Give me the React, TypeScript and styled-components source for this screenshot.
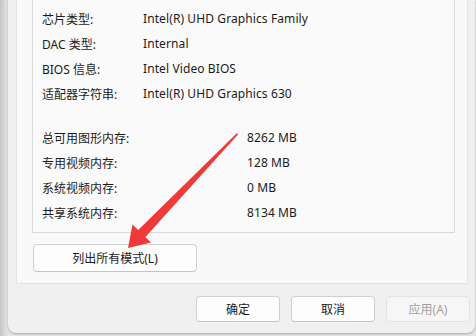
import React from "react"
import styled, { createGlobalStyle } from "styled-components"

const GlobalStyle = createGlobalStyle`
  html, body {
    margin: 0;
    padding: 0;
    width: 476px;
    height: 336px;
    overflow: hidden;
    background: linear-gradient(90deg, #c4c4c4 0px, #d6d6d6 4px, #e4e4e4 8px);
  }
  body {
    font-family: "Noto Sans", "Noto Sans CJK SC", sans-serif;
    font-size: 12px;
    color: #1a1a1a;
  }
`

const Desktop = styled.div`
  display: flex;
  height: 336px;
  padding-left: 8px;
  box-sizing: border-box;
`

const Window = styled.div`
  width: 467px;
  height: 333px;
  background: #f0f0f0;
  border-radius: 0 0 8px 8px;
  box-shadow: 0 1px 2px rgba(0, 0, 0, 0.25);
  display: flex;
  flex-direction: column;
  padding: 0 5px 0 8px;
  box-sizing: border-box;
  position: relative;
`

const TabPage = styled.div`
  width: 452px;
  height: 284px;
  background: #f9f9f9;
  border: 1px solid #e3e3e3;
  border-top: none;
  box-sizing: border-box;
  padding: 0 12px 0 15px;
  display: flex;
  flex-direction: column;
`

const InfoBox = styled.div`
  height: 233px;
  background: #fafafa;
  border: 1px solid #d9d9d9;
  border-top: none;
  box-sizing: border-box;
  padding: 6px 9px 0;
  display: flex;
  flex-direction: column;
`

const Section = styled.div<{ $gap?: number }>`
  display: flex;
  flex-direction: column;
  margin-top: ${({ $gap }) => $gap ?? 0}px;
`

const Row = styled.div<{ $labelWidth: number }>`
  display: grid;
  grid-template-columns: ${({ $labelWidth }) => $labelWidth}px 1fr;
  height: 25px;
  align-items: center;
  white-space: nowrap;
`

const Label = styled.span``

const Value = styled.span`
  letter-spacing: 0.1px;
`

const Button = styled.button<{ $width: number; $height?: number }>`
  width: ${({ $width }) => $width}px;
  height: ${({ $height }) => $height ?? 26}px;
  background: #fdfdfd;
  border: 1px solid #d0d0d0;
  border-bottom-color: #c4c4c4;
  border-radius: 4px;
  font-family: inherit;
  font-size: 12px;
  color: #1a1a1a;
  padding: 0;
  display: flex;
  align-items: center;
  justify-content: center;

  &:disabled {
    background: #f6f6f6;
    border-color: #e2e2e2;
    color: #a0a0a0;
  }
`

const ModesRow = styled.div`
  display: flex;
  margin-top: 11px;
  padding-left: 1px;
`

const Footer = styled.div`
  display: flex;
  justify-content: flex-end;
  gap: 11px;
  margin-top: 12px;
`

const Arrow = styled.svg`
  position: absolute;
  left: 0;
  top: 0;
  pointer-events: none;
`

const adapterRows = [
  ["芯片类型:", "Intel(R) UHD Graphics Family"],
  ["DAC 类型:", "Internal"],
  ["BIOS 信息:", "Intel Video BIOS"],
  ["适配器字符串:", "Intel(R) UHD Graphics 630"],
]

const memoryRows = [
  ["总可用图形内存:", "8262 MB"],
  ["专用视频内存:", "128 MB"],
  ["系统视频内存:", "0 MB"],
  ["共享系统内存:", "8134 MB"],
]

const App = () => {
  return (
    <>
      <GlobalStyle />
      <Desktop>
        <Window>
          <TabPage>
            <InfoBox>
              <Section>
                {adapterRows.map(([label, value]) => (
                  <Row key={label} $labelWidth={101}>
                    <Label>{label}</Label>
                    <Value>{value}</Value>
                  </Row>
                ))}
              </Section>
              <Section $gap={19}>
                {memoryRows.map(([label, value]) => (
                  <Row key={label} $labelWidth={205}>
                    <Label>{label}</Label>
                    <Value>{value}</Value>
                  </Row>
                ))}
              </Section>
            </InfoBox>
            <ModesRow>
              <Button $width={164} $height={28}>
                列出所有模式(L)
              </Button>
            </ModesRow>
          </TabPage>
          <Footer>
            <Button $width={84}>确定</Button>
            <Button $width={84}>取消</Button>
            <Button $width={84} disabled>
              应用(A)
            </Button>
          </Footer>
          <Arrow width="467" height="333" viewBox="8 0 467 333">
            <polygon
              points="237,133 238,134.5 145.4,236.9 151,242.5 128,248 132.5,224.5 138.2,230.1"
              fill="#ef3a3a"
            />
          </Arrow>
        </Window>
      </Desktop>
    </>
  )
}

export default App
